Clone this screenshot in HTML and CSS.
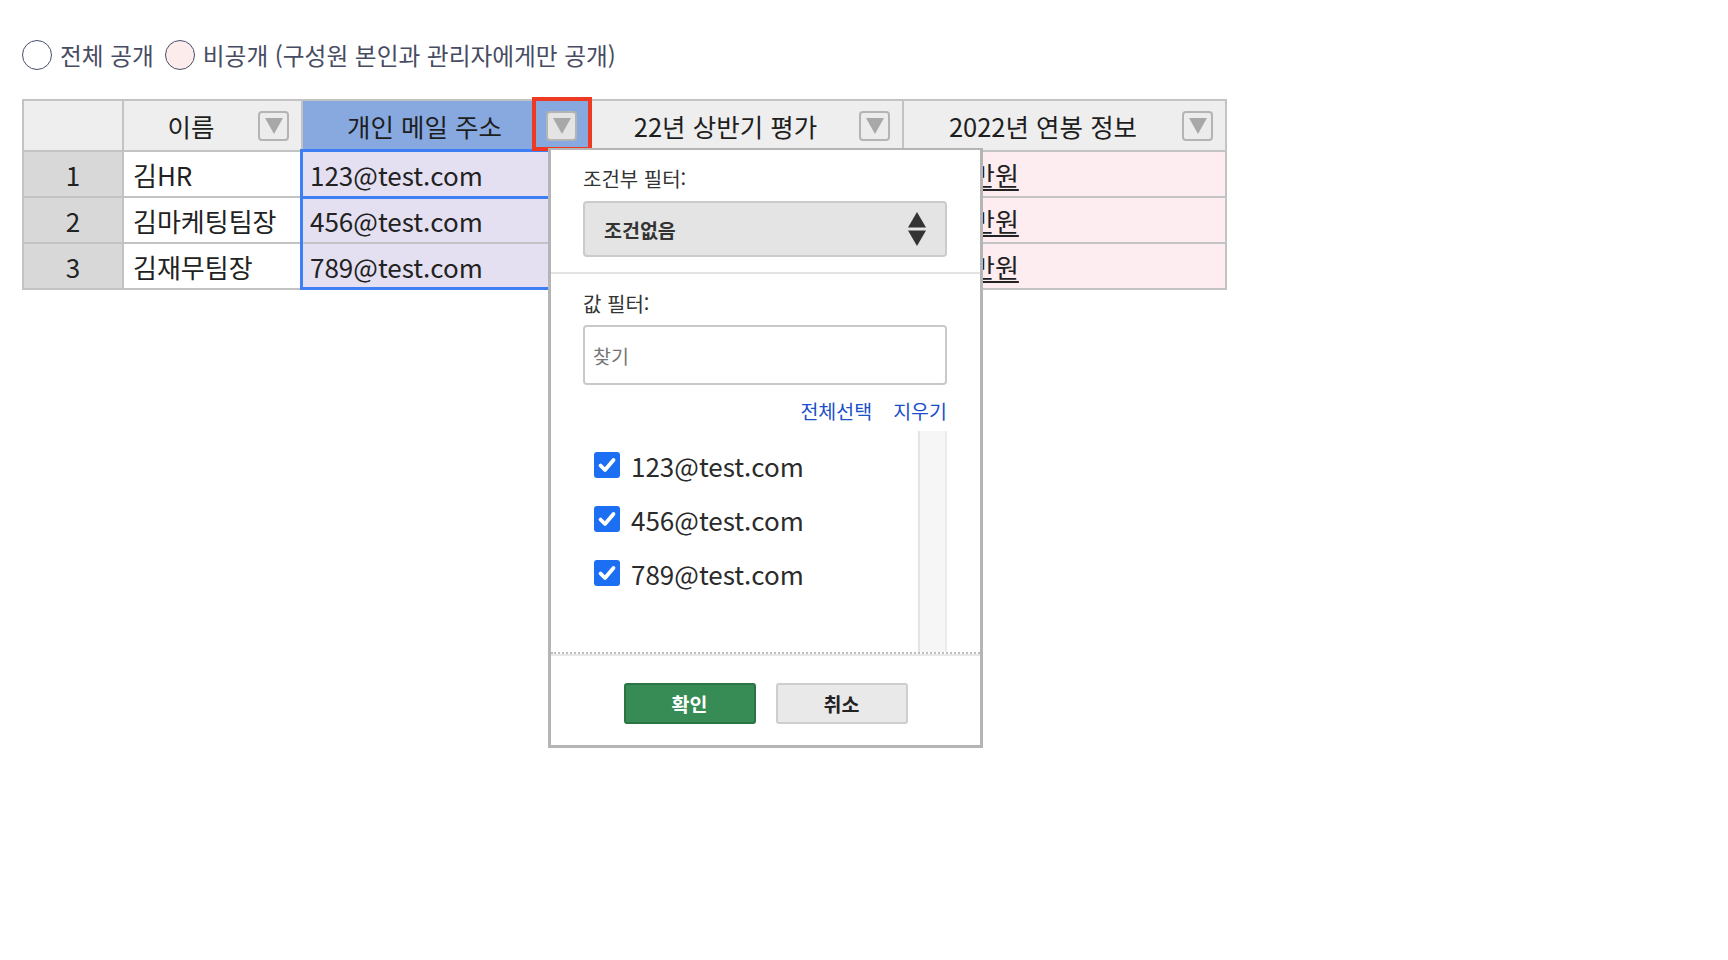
FILE: index.html
```html
<!DOCTYPE html>
<html lang="ko">
<head>
<meta charset="utf-8">
<title>필터</title>
<link rel="stylesheet" href="styles.css">
</head>
<body>
<div class="page">
  <div class="radios">
    <label class="radio"><span class="circle"></span><span class="rtext">전체 공개</span></label>
    <label class="radio"><span class="circle pink"></span><span class="rtext">비공개 (구성원 본인과 관리자에게만 공개)</span></label>
  </div>

  <div class="sheet">
    <div class="grid">
      <div class="hcell corner"></div>
      <div class="hcell"><span class="hlabel">이름</span><span class="fbtn"><svg viewBox="0 0 20 18" width="20" height="18"><path d="M1 1 H19 L10 17 Z" fill="#a8a8a8"/></svg></span></div>
      <div class="hcell hsel"><span class="hlabel">개인 메일 주소</span><span class="fbtn fbtn-sel"><svg viewBox="0 0 20 18" width="20" height="18"><path d="M1 1 H19 L10 17 Z" fill="#a8a8a8"/></svg></span></div>
      <div class="hcell"><span class="hlabel">22년 상반기 평가</span><span class="fbtn"><svg viewBox="0 0 20 18" width="20" height="18"><path d="M1 1 H19 L10 17 Z" fill="#a8a8a8"/></svg></span></div>
      <div class="hcell"><span class="hlabel">2022년 연봉 정보</span><span class="fbtn"><svg viewBox="0 0 20 18" width="20" height="18"><path d="M1 1 H19 L10 17 Z" fill="#a8a8a8"/></svg></span></div>

      <div class="cell num">1</div>
      <div class="cell">김HR</div>
      <div class="cell mail">123@test.com</div>
      <div class="cell"></div>
      <div class="cell money"><span class="u">만원</span></div>

      <div class="cell num">2</div>
      <div class="cell">김마케팅팀장</div>
      <div class="cell mail">456@test.com</div>
      <div class="cell"></div>
      <div class="cell money"><span class="u">만원</span></div>

      <div class="cell num">3</div>
      <div class="cell">김재무팀장</div>
      <div class="cell mail">789@test.com</div>
      <div class="cell"></div>
      <div class="cell money"><span class="u">만원</span></div>
    </div>

    <div class="sel-col"></div>
    <div class="sel-cell"></div>
    <div class="hilite"></div>

    <div class="popup">
      <div class="sec sec-cond">
        <div class="plabel">조건부 필터:</div>
        <div class="select">
          <span class="stext">조건없음</span>
          <svg class="sarrows" viewBox="0 0 20 34" width="20" height="34"><path d="M10 0 L19 15.5 H1 Z" fill="#333"/><path d="M1 18.5 H19 L10 34 Z" fill="#333"/></svg>
        </div>
      </div>
      <div class="sec sec-val">
        <div class="plabel">값 필터:</div>
        <div class="search">찾기</div>
        <div class="links"><span class="link">전체선택</span><span class="link">지우기</span></div>
        <div class="list">
          <div class="items">
            <div class="item"><span class="chk"><svg viewBox="0 0 26 26" width="26" height="26"><rect width="26" height="26" rx="3" fill="#1c6ef3"/><path d="M6.5 13.5 L11 18 L19.5 8" stroke="#fff" stroke-width="3.8" fill="none" stroke-linecap="round" stroke-linejoin="round"/></svg></span><span class="itext">123@test.com</span></div>
            <div class="item"><span class="chk"><svg viewBox="0 0 26 26" width="26" height="26"><rect width="26" height="26" rx="3" fill="#1c6ef3"/><path d="M6.5 13.5 L11 18 L19.5 8" stroke="#fff" stroke-width="3.8" fill="none" stroke-linecap="round" stroke-linejoin="round"/></svg></span><span class="itext">456@test.com</span></div>
            <div class="item"><span class="chk"><svg viewBox="0 0 26 26" width="26" height="26"><rect width="26" height="26" rx="3" fill="#1c6ef3"/><path d="M6.5 13.5 L11 18 L19.5 8" stroke="#fff" stroke-width="3.8" fill="none" stroke-linecap="round" stroke-linejoin="round"/></svg></span><span class="itext">789@test.com</span></div>
          </div>
          <div class="track"></div>
        </div>
      </div>
      <div class="footer">
        <button class="btn ok">확인</button>
        <button class="btn cancel">취소</button>
      </div>
    </div>
  </div>
</div>
</body>
</html>
```

FILE: styles.css
```css
* { box-sizing: border-box; }
html, body { margin: 0; padding: 0; background: #fff; }
body {
  font-family: "Noto Sans CJK KR", "Noto Sans", sans-serif;
  color: #222;
}
.page { padding: 40px 22px; min-height: 960px; }

.radios { display: flex; align-items: center; height: 30px; }
.radio { display: flex; align-items: center; margin-right: 11px; }
.circle {
  width: 30px; height: 30px; border-radius: 50%;
  border: 1.5px solid #4a4f68; background: #fff;
}
.circle.pink { background: #fdecec; }
.rtext { margin-left: 8px; font-size: 23.7px; color: #474c63; line-height: 30px; }

.sheet { position: relative; margin-top: 29px; width: 1205px; }
.grid {
  display: grid;
  grid-template-columns: 98px 177px 287px 310px 321px;
  grid-template-rows: 49px 44px 44px 44px;
  gap: 2px; padding: 2px;
  background: #c3c3c3;
}
.hcell {
  background: #eeeeee;
  display: flex; align-items: center;
  font-size: 25.5px; color: #1e1e1e;
}
.hcell.hsel { background: #87a9e0; }
.hlabel { flex: 1; text-align: center; }
.fbtn {
  width: 31px; height: 30px; margin-right: 12px;
  border: 2px solid #b4b4b4; border-radius: 4px; background: #ececec;
  display: flex; align-items: center; justify-content: center;
}
.fbtn svg { display: block; margin-top: 1px; }
.fbtn-sel { margin-right: 13px; background: #e4e4e4; }

.cell {
  background: #fff;
  display: flex; align-items: center;
  padding-left: 9px;
  font-size: 26px; color: #222;
}
.cell.num { background: #d8d8d8; justify-content: center; padding-left: 0; }
.cell.mail { background: #e4e0f1; padding-left: 7px; }
.cell.money { background: #fdedf0; padding-left: 67px; }
.u { text-decoration: underline; text-underline-offset: 3px; }

.sel-col {
  position: absolute; left: 278px; top: 50px; width: 314px; height: 141px;
  border: 3px solid #3e7ff3;
}
.sel-cell {
  position: absolute; left: 278px; top: 50px; width: 314px; height: 50px;
  border: 3px solid #3e7ff3;
}
.hilite {
  position: absolute; left: 510px; top: -2px; width: 60px; height: 54px;
  border: 4px solid #ee3a22;
}

.popup {
  position: absolute; left: 526px; top: 49px; width: 435px; height: 600px;
  background: #fff;
  border: 3px solid #b5b5b5; border-top-width: 2px;
  display: flex; flex-direction: column;
  z-index: 5;
}
.sec { padding-left: 32px; padding-right: 33px; }
.sec-cond { padding-top: 16px; padding-bottom: 15px; border-bottom: 2px solid #e3e3e3; }
.plabel { font-size: 20px; line-height: 26px; color: #333; }
.select {
  margin-top: 9px; height: 56px;
  background: #e4e4e4; border: 2px solid #cbcbcb; border-radius: 4px;
  display: flex; align-items: center; justify-content: space-between;
  padding: 0 18px 0 19px;
}
.stext { font-size: 19.5px; font-weight: 700; color: #333; }
.sarrows { display: block; }

.sec-val { padding-top: 17px; border-bottom: 2px dotted #bdbdbd; }
.search {
  margin-top: 8px; height: 60px;
  border: 2px solid #c9c9c9; border-radius: 4px;
  display: flex; align-items: center; padding-left: 8px;
  font-size: 19.5px; color: #777;
}
.links { margin-top: 13px; height: 26px; display: flex; justify-content: flex-end; gap: 21px; }
.link { font-size: 19.5px; line-height: 26px; color: #1a4fc8; }
.list { margin-top: 7px; height: 221px; display: flex; }
.items { flex: 1; padding-top: 7px; padding-left: 11px; }
.item { display: flex; align-items: center; height: 54px; }
.chk { width: 26px; height: 26px; }
.chk svg { display: block; }
.itext { margin-left: 11px; font-size: 26px; color: #2b2b2b; }
.track {
  width: 29px; background: #f6f6f6;
  border-left: 2px solid #e4e4e4; border-right: 2px solid #ebebeb;
}

.footer {
  flex: 1; border-top: 2px solid #e8e8e8;
  display: flex; justify-content: center; gap: 20px;
  padding-top: 27px;
}
.btn {
  width: 132px; height: 41px; border-radius: 3px;
  font-family: "Noto Sans CJK KR", "Noto Sans", sans-serif;
  font-size: 19.5px; font-weight: 700; padding: 0;
}
.btn.ok { background: #378c55; border: 2px solid #2c7446; color: #fff; }
.btn.cancel { background: #e9e9e9; border: 2px solid #cecece; color: #222; }
```
